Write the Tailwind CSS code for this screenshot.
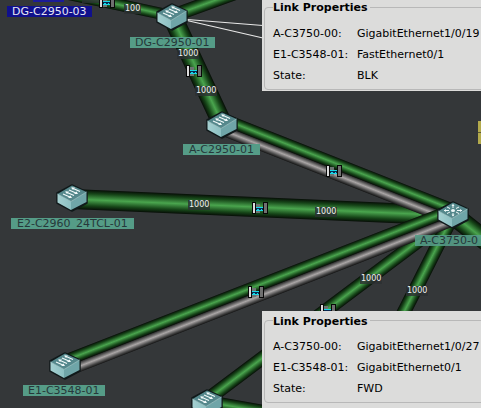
<!DOCTYPE html>
<html lang="en">
<head>
<meta charset="utf-8">
<title>Network topology</title>
<script src="https://cdn.jsdelivr.net/npm/@tailwindcss/browser@4"></script>
</head>
<body class="bg-[#343739] font-['DejaVu_Sans',sans-serif] text-[11px] leading-[11px]">
<main class="relative h-screen w-full overflow-hidden">
  <svg class="absolute inset-0 h-full w-full" role="img" aria-label="Network links and switches">
    <defs>
      <linearGradient id="green" x1="0" y1="0" x2="0" y2="1">
        <stop offset="0" stop-color="#060d06"/><stop offset=".2" stop-color="#164518"/>
        <stop offset=".5" stop-color="#4aa54e"/><stop offset=".8" stop-color="#164518"/>
        <stop offset="1" stop-color="#060d06"/>
      </linearGradient>
      <linearGradient id="gray" x1="0" y1="0" x2="0" y2="1">
        <stop offset="0" stop-color="#0c0c0c"/><stop offset=".2" stop-color="#4a4a4a"/>
        <stop offset=".5" stop-color="#aaa6a6"/><stop offset=".8" stop-color="#4a4a4a"/>
        <stop offset="1" stop-color="#141414"/>
      </linearGradient>
      <linearGradient id="side" x1="0" y1="0" x2="1" y2="0">
        <stop offset="0" stop-color="#a5d0d1"/><stop offset="1" stop-color="#8cc0c2"/>
      </linearGradient>
      <g id="box">
        <path d="M-15 -5 L0 -13 L15 -6 V5 L0 13 L-15 5 Z" fill="#10191a" stroke="#10191a" stroke-width="1.5" stroke-linejoin="round"/>
        <path d="M-14.500 -4 L0 -12.500 L14.500 -6 L-1 3.500 Z" fill="#55888c"/>
        <path d="M-14.500 -4 L-1 3.500 V12 L-14.500 4.500 Z" fill="url(#side)"/>
        <path d="M-1 3.500 L14.500 -6 V4 L-1 12 Z" fill="#6fa5a8"/>
        <path d="M-14.500 -4 L-1 3.500 L14.500 -6" fill="none" stroke="#a9d0d0" stroke-width=".7"/>
      </g>
      <g id="switch">
        <use href="#box"/>
        <g id="arrows" stroke="#f2fafa" stroke-width="1.100" fill="none">
          <path d="M0 -10 L8 -6.500 M-3 -8 L5 -4.500 M-6 -6 L2 -2.500 M-9 -4 L-1 -.500"/>
        </g>
        <path d="M-1 -10.500 L3 -10.500 L1 -8 Z M6 -4 L2 -4 L4.500 -6.500 Z M-7 -6.500 L-3 -6.500 L-5 -4 Z M0 0 L-4 0 L-1.500 -2.500 Z" fill="#f2fafa"/>
      </g>
      <g id="core">
        <use href="#box"/>
        <g stroke="#eef8f8" stroke-width="1">
          <path d="M-9 -4.500 H-4 M4 -4.500 H9 M0 -10.500 V-7 M0 -2 V1 M-6 -8 L-3 -6.500 M3 -6.500 L6 -8 M-6 -1.500 L-3 -3 M3 -3 L6 -1.500"/>
        </g>
        <path d="M-9 -4.500 L-7 -6 V-3 Z M9 -4.500 L7 -6 V-3 Z M0 -11 L-1.500 -9 H1.500 Z M0 1.500 L-1.500 -.5 H1.500 Z" fill="#eef8f8"/>
        <ellipse cy="-4.500" rx="2" ry="1.500" fill="#eef8f8"/>
      </g>
      <g id="port" shape-rendering="crispEdges">
        <rect x="-8" y="-6" width="4" height="12" fill="#080808"/><rect x="-7" y="-5" width="2" height="10" fill="#dcdcdc"/>
        <rect x="-4" y="-4" width="4" height="9" fill="#6c7472"/>
        <rect x="-4" y="-1" width="8" height="4" fill="#082850"/>
        <path d="M-4 -.5 H4 M-4 2.500 H3" stroke="#18d8e8"/><path d="M-3 1 H-1 M1 1 H2" stroke="#18d8e8"/>
        <rect x="3" y="-6" width="5" height="12" fill="#080808"/><rect x="4" y="-5" width="3" height="10" fill="#707070"/>
      </g>
    </defs>

    <g fill="url(#green)">
      <rect x="-120" y="-6" width="120" height="12" transform="translate(172 16) rotate(12)"/>
      <rect y="-7" width="120" height="14" transform="translate(172 16) rotate(-20)"/>
      <rect y="-10" width="119" height="20" transform="translate(172 16) rotate(65)"/>
      <rect y="-7" width="308" height="14" transform="translate(453 215) rotate(143.100)"/>
      <rect y="-7" width="240" height="14" transform="translate(453 215) rotate(116.800)"/>
      <rect y="-10" width="80" height="20" transform="translate(453 215) rotate(38)"/>
      <rect y="-7" width="90" height="14" transform="translate(207 402) rotate(10)"/>
      <rect y="-10" width="372" height="20" transform="translate(72 199) rotate(2.500)"/>
    </g>
    <g transform="translate(222 124) rotate(21.500)">
      <rect y="0" width="248" height="11" fill="url(#gray)"/><rect y="-11" width="248" height="12" fill="url(#green)"/>
    </g>
    <g transform="translate(65 366) rotate(-21.300)">
      <rect y="0" width="416" height="11" fill="url(#gray)"/><rect y="-11" width="416" height="12" fill="url(#green)"/>
    </g>
    <path d="M187 19.500 L263 25.500 M187 20.500 L263 38" stroke="#e8e8e8" stroke-width="1.200"/>
    <rect x="33" width="31" height="2" fill="#1b1b98"/>
    <rect x="478" y="121" width="20" height="23" fill="#b3aa4c"/><path d="M478 132.500 H498" stroke="#5c5830"/>

    <use href="#port" x="107" y="2"/>
    <use href="#port" x="194" y="71"/>
    <use href="#port" x="334" y="171"/>
    <use href="#port" x="260" y="208"/>
    <use href="#port" x="256" y="292"/>
    <use href="#port" x="328" y="310"/>
    <use href="#switch" x="172" y="17"/>
    <use href="#switch" x="222" y="125"/>
    <use href="#switch" x="72" y="198"/>
    <use href="#switch" x="65" y="366"/>
    <use href="#switch" x="207" y="403"/>
    <use href="#core" x="453" y="215"/>
  </svg>

  <div class="whitespace-nowrap text-[#26383a]">
    <span class="absolute left-[7px] top-[6px] bg-[#10108c] px-[5px] text-[#e6e6f4]">DG-C2950-03</span>
    <span class="absolute left-[130px] top-[37px] bg-[#559c87] px-[5px]">DG-C2950-01</span>
    <span class="absolute left-[183px] top-[144px] bg-[#559c87] px-[6px]">A-C2950-01</span>
    <span class="absolute left-[11px] top-[218px] bg-[#559c87] px-[6px]">E2-C2960_24TCL-01</span>
    <span class="absolute -right-2 left-[415px] top-[235px] bg-[#559c87]/90 px-[5px]">A-C3750-0</span>
    <span class="absolute left-[23px] top-[385px] bg-[#559c87] px-[5px]">E1-C3548-01</span>
  </div>

  <div class="text-[8px] leading-[10px] text-[#f0f0f0]">
    <span class="absolute left-[82px] top-[-7px] bg-[#2c2f32]/80 px-px">100</span>
    <span class="absolute left-[124px] top-[4px] bg-[#2c2f32]/80 px-px">100</span>
    <span class="absolute left-[177px] top-[49px] bg-[#2c2f32]/80 px-px">1000</span>
    <span class="absolute left-[195px] top-[86px] bg-[#2c2f32]/80 px-px">1000</span>
    <span class="absolute left-[188px] top-[200px] bg-[#2c2f32]/80 px-px">1000</span>
    <span class="absolute left-[315px] top-[207px] bg-[#2c2f32]/80 px-px">1000</span>
    <span class="absolute left-[360px] top-[274px] bg-[#2c2f32]/80 px-px">1000</span>
    <span class="absolute left-[406px] top-[286px] bg-[#2c2f32]/80 px-px">1000</span>
  </div>

  <section class="absolute -right-4 left-[262px] top-0 bg-[#dcdcdb] pb-px pl-[2px] text-black">
    <fieldset class="rounded-[4px] border border-[#b8b8b8] pb-[3px] pl-2">
      <legend class="pr-[2px] pt-[2px] text-[11px] font-bold leading-[12px]">Link Properties</legend>
      <dl class="grid grid-cols-[84px_1fr] whitespace-nowrap pt-[9px] leading-[21px]">
        <dt>A-C3750-00:</dt><dd>GigabitEthernet1/0/19</dd>
        <dt>E1-C3548-01:</dt><dd>FastEthernet0/1</dd>
        <dt>State:</dt><dd>BLK</dd>
      </dl>
    </fieldset>
  </section>

  <section class="absolute -right-4 bottom-0 left-[262px] top-[311px] bg-[#dcdcdb] pl-[2px] pt-px text-black">
    <fieldset class="rounded-[4px] border border-[#b8b8b8] pb-[3px] pl-2">
      <legend class="pr-[2px] pt-[4px] text-[11px] font-bold leading-[12px]">Link Properties</legend>
      <dl class="grid grid-cols-[84px_1fr] whitespace-nowrap pt-2 leading-[21px]">
        <dt>A-C3750-00:</dt><dd>GigabitEthernet1/0/27</dd>
        <dt>E1-C3548-01:</dt><dd>GigabitEthernet0/1</dd>
        <dt>State:</dt><dd>FWD</dd>
      </dl>
    </fieldset>
  </section>
</main>
</body>
</html>
